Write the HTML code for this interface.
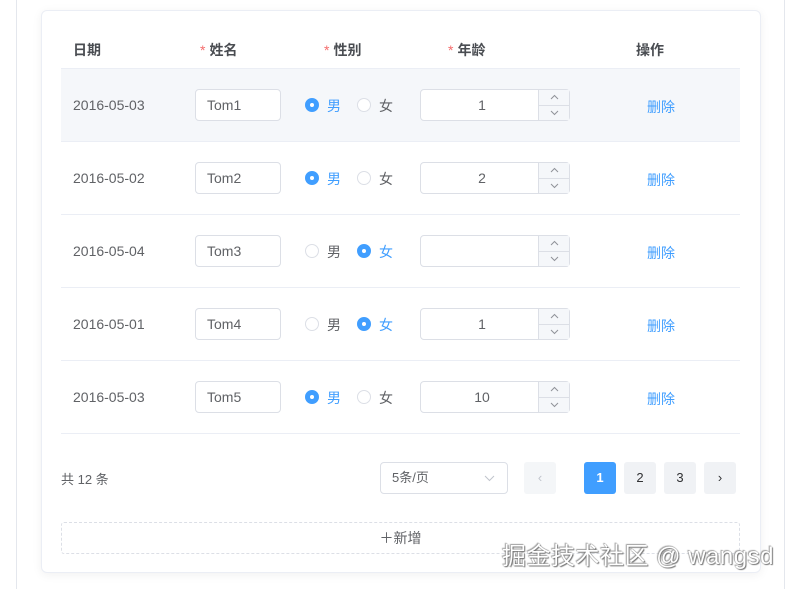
<!DOCTYPE html>
<html><head><meta charset="utf-8"><style>
*{box-sizing:border-box;margin:0;padding:0}
body{width:799px;height:589px;background:#fff;position:relative;overflow:hidden;font-family:"Liberation Sans","Noto Sans CJK SC",sans-serif;font-size:14px;color:#606266}
.a{position:absolute}
.vl{position:absolute;top:0;bottom:0;width:1px;background:#e4e7ed}
.card{position:absolute;left:41px;top:10px;width:720px;height:563px;border:1px solid #ebeef5;border-radius:6px;box-shadow:0 2px 10px rgba(0,0,0,.06);background:#fff}
.th{position:absolute;top:40px;font-weight:bold;color:#4a4d52;font-size:14px}
.star{color:#f56c6c;margin-right:4px;font-weight:normal}
.row{position:absolute;left:61px;width:679px;height:73px;border-bottom:1px solid #ebeef5}
.inp{position:absolute;left:134px;top:20px;width:86px;height:32px;border:1px solid #dcdfe6;border-radius:4px;background:#fff;padding-left:11px;line-height:30px;color:#606266}
.rad{position:absolute;top:29px;width:14px;height:14px;border-radius:50%;border:1px solid #dcdfe6;background:#fff}
.rad.on{background:#409eff;border-color:#409eff}
.rad.on::after{content:"";position:absolute;left:4px;top:4px;width:4px;height:4px;border-radius:50%;background:#fff}
.rl{position:absolute;top:27px;font-size:14px}
.num{position:absolute;left:359px;top:20px;width:150px;height:32px;border:1px solid #dcdfe6;border-radius:4px;background:#fff}
.num .v{position:absolute;left:0;width:122px;text-align:center;line-height:30px}
.num .b{position:absolute;left:117px;width:31px;height:15px;border-left:1px solid #dcdfe6;background:#f5f7fa}
.num svg{position:absolute;left:11px;top:4px}
.del{position:absolute;left:586px;top:28px;color:#409eff;font-size:14px}
.date{position:absolute;left:12px;top:28px}
.pg{position:absolute;top:462px;width:32px;height:32px;border-radius:3px;background:#f0f2f5;text-align:center;line-height:32px;color:#303133;font-size:13px}
</style></head><body>
<div class="vl" style="left:16px"></div><div class="vl" style="left:784px"></div>
<div class="card"></div>
<div class="th" style="left:73px">日期</div>
<div class="th" style="left:200px"><span class="star">*</span>姓名</div>
<div class="th" style="left:324px"><span class="star">*</span>性别</div>
<div class="th" style="left:448px"><span class="star">*</span>年龄</div>
<div class="th" style="left:636px">操作</div>
<div class="a" style="left:61px;top:68px;width:679px;height:1px;background:#ebeef5"></div>

<div class="row" style="top:69px;background:#f5f7fa"><div class="date">2016-05-03</div><div class="inp">Tom1</div><div class="rad on" style="left:244px"></div><div class="rl" style="left:266px;color:#409eff">男</div><div class="rad" style="left:296px"></div><div class="rl" style="left:318px">女</div><div class="num"><div class="v">1</div><div class="b" style="top:0"><svg width="9" height="6"><path d="M1 5L4.5 1.5L8 5" fill="none" stroke="#909399"/></svg></div><div class="b" style="top:15px;border-top:1px solid #dcdfe6"><svg width="9" height="6"><path d="M1 1L4.5 4.5L8 1" fill="none" stroke="#909399"/></svg></div></div><div class="del">删除</div></div>
<div class="row" style="top:142px"><div class="date">2016-05-02</div><div class="inp">Tom2</div><div class="rad on" style="left:244px"></div><div class="rl" style="left:266px;color:#409eff">男</div><div class="rad" style="left:296px"></div><div class="rl" style="left:318px">女</div><div class="num"><div class="v">2</div><div class="b" style="top:0"><svg width="9" height="6"><path d="M1 5L4.5 1.5L8 5" fill="none" stroke="#909399"/></svg></div><div class="b" style="top:15px;border-top:1px solid #dcdfe6"><svg width="9" height="6"><path d="M1 1L4.5 4.5L8 1" fill="none" stroke="#909399"/></svg></div></div><div class="del">删除</div></div>
<div class="row" style="top:215px"><div class="date">2016-05-04</div><div class="inp">Tom3</div><div class="rad" style="left:244px"></div><div class="rl" style="left:266px">男</div><div class="rad on" style="left:296px"></div><div class="rl" style="left:318px;color:#409eff">女</div><div class="num"><div class="v"></div><div class="b" style="top:0"><svg width="9" height="6"><path d="M1 5L4.5 1.5L8 5" fill="none" stroke="#909399"/></svg></div><div class="b" style="top:15px;border-top:1px solid #dcdfe6"><svg width="9" height="6"><path d="M1 1L4.5 4.5L8 1" fill="none" stroke="#909399"/></svg></div></div><div class="del">删除</div></div>
<div class="row" style="top:288px"><div class="date">2016-05-01</div><div class="inp">Tom4</div><div class="rad" style="left:244px"></div><div class="rl" style="left:266px">男</div><div class="rad on" style="left:296px"></div><div class="rl" style="left:318px;color:#409eff">女</div><div class="num"><div class="v">1</div><div class="b" style="top:0"><svg width="9" height="6"><path d="M1 5L4.5 1.5L8 5" fill="none" stroke="#909399"/></svg></div><div class="b" style="top:15px;border-top:1px solid #dcdfe6"><svg width="9" height="6"><path d="M1 1L4.5 4.5L8 1" fill="none" stroke="#909399"/></svg></div></div><div class="del">删除</div></div>
<div class="row" style="top:361px"><div class="date">2016-05-03</div><div class="inp">Tom5</div><div class="rad on" style="left:244px"></div><div class="rl" style="left:266px;color:#409eff">男</div><div class="rad" style="left:296px"></div><div class="rl" style="left:318px">女</div><div class="num"><div class="v">10</div><div class="b" style="top:0"><svg width="9" height="6"><path d="M1 5L4.5 1.5L8 5" fill="none" stroke="#909399"/></svg></div><div class="b" style="top:15px;border-top:1px solid #dcdfe6"><svg width="9" height="6"><path d="M1 1L4.5 4.5L8 1" fill="none" stroke="#909399"/></svg></div></div><div class="del">删除</div></div>

<div class="a" style="left:61px;top:469px;font-size:13px">共 12 条</div>
<div class="a" style="left:380px;top:462px;width:128px;height:32px;border:1px solid #dcdfe6;border-radius:4px;padding-left:11px;line-height:30px;font-size:13px">5条/页<svg style="position:absolute;right:12px;top:12px" width="11" height="7"><path d="M1 1L5.5 5.5L10 1" fill="none" stroke="#c0c4cc"/></svg></div>
<div class="pg" style="left:524px;color:#c0c4cc;background:#f4f6f8">‹</div>
<div class="pg" style="left:584px;background:#409eff;color:#fff;font-weight:bold">1</div>
<div class="pg" style="left:624px">2</div>
<div class="pg" style="left:664px">3</div>
<div class="pg" style="left:704px">›</div>
<div class="a" style="left:61px;top:522px;width:679px;height:32px;border:1px dashed #dcdfe6;border-radius:3px;text-align:center;line-height:30px;color:#606266">＋新增</div>
<div class="a" style="left:502px;top:536px;font-size:24px;color:#fff;letter-spacing:0.5px;text-shadow:0 0 1px #666,1px 1px 1px #777,-1px -1px 1px #aaa">掘金技术社区 @ wangsd</div>
</body></html>
